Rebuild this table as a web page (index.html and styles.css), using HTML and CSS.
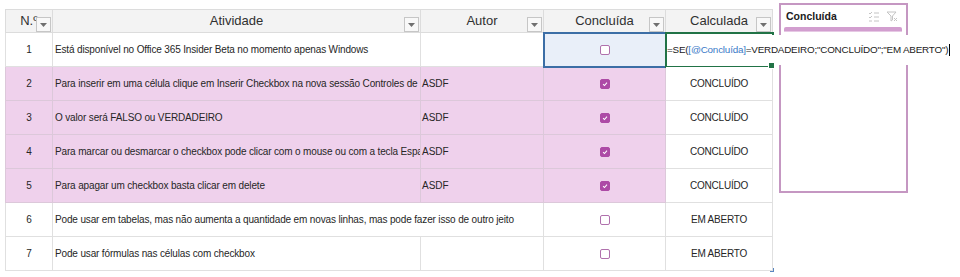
FILE: index.html
```html
<!DOCTYPE html>
<html lang="pt">
<head>
<meta charset="utf-8">
<title>Checkbox</title>
<link rel="stylesheet" href="styles.css">
</head>
<body>
<div class="sheet">
  <table class="tbl">
    <colgroup>
      <col class="c-n"><col class="c-at"><col class="c-au"><col class="c-co"><col class="c-ca">
    </colgroup>
    <thead>
      <tr>
        <th>N.º<span class="fbtn"><svg viewBox="0 0 7 4" width="7" height="4"><path d="M0 0h7L3.5 4z" fill="#707070"/></svg></span></th>
        <th>Atividade<span class="fbtn"><svg viewBox="0 0 7 4" width="7" height="4"><path d="M0 0h7L3.5 4z" fill="#707070"/></svg></span></th>
        <th>Autor<span class="fbtn"><svg viewBox="0 0 7 4" width="7" height="4"><path d="M0 0h7L3.5 4z" fill="#707070"/></svg></span></th>
        <th>Concluída<span class="fbtn"><svg viewBox="0 0 7 4" width="7" height="4"><path d="M0 0h7L3.5 4z" fill="#707070"/></svg></span></th>
        <th>Calculada<span class="fbtn"><svg viewBox="0 0 7 4" width="7" height="4"><path d="M0 0h7L3.5 4z" fill="#707070"/></svg></span></th>
      </tr>
    </thead>
    <tbody>
      <tr>
        <td class="num">1</td>
        <td class="txt">Está disponível no Office 365 Insider Beta no momento apenas Windows</td>
        <td class="aut"></td>
        <td class="chk sel"><span class="box"></span></td>
        <td class="calc edit"><div class="formula">=SE(<span class="ref">[@Concluída]</span>=VERDADEIRO;"CONCLUÍDO";"EM ABERTO")<span class="caret"></span></div></td>
      </tr>
      <tr class="done">
        <td class="num">2</td>
        <td class="txt">Para inserir em uma célula clique em Inserir Checkbox na nova sessão Controles de Célula</td>
        <td class="aut">ASDF</td>
        <td class="chk"><span class="box on"><svg viewBox="0 0 10 10" width="10" height="10"><path d="M2.6 5.3l1.7 1.6 3.2-3.6" fill="none" stroke="#fff" stroke-width="1.3"/></svg></span></td>
        <td class="calc">CONCLUÍDO</td>
      </tr>
      <tr class="done">
        <td class="num">3</td>
        <td class="txt">O valor será FALSO ou VERDADEIRO</td>
        <td class="aut">ASDF</td>
        <td class="chk"><span class="box on"><svg viewBox="0 0 10 10" width="10" height="10"><path d="M2.6 5.3l1.7 1.6 3.2-3.6" fill="none" stroke="#fff" stroke-width="1.3"/></svg></span></td>
        <td class="calc">CONCLUÍDO</td>
      </tr>
      <tr class="done">
        <td class="num">4</td>
        <td class="txt">Para marcar ou desmarcar o checkbox pode clicar com o mouse ou com a tecla Espaço</td>
        <td class="aut">ASDF</td>
        <td class="chk"><span class="box on"><svg viewBox="0 0 10 10" width="10" height="10"><path d="M2.6 5.3l1.7 1.6 3.2-3.6" fill="none" stroke="#fff" stroke-width="1.3"/></svg></span></td>
        <td class="calc">CONCLUÍDO</td>
      </tr>
      <tr class="done">
        <td class="num">5</td>
        <td class="txt">Para apagar um checkbox basta clicar em delete</td>
        <td class="aut">ASDF</td>
        <td class="chk"><span class="box on"><svg viewBox="0 0 10 10" width="10" height="10"><path d="M2.6 5.3l1.7 1.6 3.2-3.6" fill="none" stroke="#fff" stroke-width="1.3"/></svg></span></td>
        <td class="calc">CONCLUÍDO</td>
      </tr>
      <tr>
        <td class="num">6</td>
        <td class="txt spill">Pode usar em tabelas, mas não aumenta a quantidade em novas linhas, mas pode fazer isso de outro jeito</td>
        <td class="aut spilled"></td>
        <td class="chk"><span class="box"></span></td>
        <td class="calc">EM ABERTO</td>
      </tr>
      <tr>
        <td class="num">7</td>
        <td class="txt">Pode usar fórmulas nas células com checkbox</td>
        <td class="aut"></td>
        <td class="chk"><span class="box"></span></td>
        <td class="calc">EM ABERTO<span class="handle"></span></td>
      </tr>
    </tbody>
  </table>

  <div class="slicer">
    <div class="sl-head">
      <span class="sl-title">Concluída</span>
      <span class="sl-icons">
        <svg viewBox="0 0 12 11" width="12" height="11"><g fill="none" stroke="#c4c4c4" stroke-width="1"><path d="M1 2l1 1 2-2M1 6l1 1 2-2"/><path d="M6 2h5M6 6h5M6 10h5M1 10h3"/></g></svg>
        <svg viewBox="0 0 12 11" width="12" height="11"><g fill="none" stroke="#c4c4c4" stroke-width="1"><path d="M1 1h9L6.5 5v4l-1.5 1V5z"/><path d="M8 7l3 3M11 7l-3 3"/></g></svg>
      </span>
    </div>
    <div class="sl-item">
      <div class="sl-bar"></div>
      <div class="sl-body"></div>
      <div class="sl-foot"></div>
    </div>
  </div>
</div>
</body>
</html>
```
FILE: styles.css
```css
html, body {
  margin: 0;
  padding: 0;
  background: #ffffff;
}
body {
  width: 960px;
  height: 277px;
  overflow: hidden;
  font-family: "Liberation Sans", Arial, sans-serif;
  color: #262626;
}
.sheet {
  padding: 9px 0 0 5px;
}
.tbl {
  border-collapse: collapse;
  table-layout: fixed;
  width: 767px;
}
.c-n { width: 47px; }
.c-at { width: 368px; }
.c-au { width: 123px; }
.c-co { width: 122px; }
.c-ca { width: 107px; }

.tbl th {
  height: 22px;
  padding: 0;
  background: #f3f3f3;
  border: 1px solid #dcdcdc;
  font-weight: normal;
  font-size: 13px;
  color: #303030;
  text-align: center;
  position: relative;
  line-height: 22px;
  white-space: nowrap;
}
.fbtn {
  position: absolute;
  right: 1px;
  bottom: 0;
  width: 13px;
  height: 13px;
  border: 1px solid #c6c6c6;
  background: #f8f8f8;
  display: flex;
  align-items: center;
  justify-content: center;
}
.tbl td {
  height: 33px;
  padding: 0;
  border: 1px solid #e0e0e0;
  font-size: 10px;
  white-space: nowrap;
  overflow: hidden;
  vertical-align: middle;
}
.tbl tr.done td {
  background: #efd1ec;
  border-color: #dcc8da;
}
.tbl tr.done td.calc {
  background: #ffffff;
  border-color: #e0e0e0;
}
.num {
  text-align: center;
  font-size: 10.5px;
}
.tbl td.txt {
  padding-left: 2px;
  padding-right: 3px;
  letter-spacing: -0.15px;
}
.tbl td.spill {
  overflow: visible;
  border-right-style: hidden;
}
.tbl td.spilled {
  border-left-style: hidden;
}
.tbl td.aut {
  padding-left: 1px;
}
.chk {
  text-align: center;
}
.box {
  display: inline-flex;
  width: 8px;
  height: 8px;
  border: 1.5px solid #b071ad;
  border-radius: 2px;
  background: #fff;
  vertical-align: middle;
  align-items: center;
  justify-content: center;
}
.box.on {
  background: #ad4aa6;
  border-color: #ad4aa6;
}
.box svg { display: block; }
.calc {
  text-align: center;
  letter-spacing: -0.2px;
}
.tbl td.sel {
  background: #e9eff9;
  outline: 2px solid #3c6ea6;
  outline-offset: -1px;
}
.tbl td.edit {
  position: relative;
  overflow: visible;
  outline: 2px solid #217346;
  outline-offset: -1px;
}
.tbl td.edit::after {
  content: "";
  position: absolute;
  right: -3px;
  bottom: -3px;
  width: 5px;
  height: 5px;
  background: #217346;
  border: 1px solid #fff;
  z-index: 4;
}
.formula {
  position: absolute;
  left: 1px;
  top: 2px;
  height: 30px;
  width: 290px;
  background: #fff;
  z-index: 3;
  font-size: 9.85px;
  line-height: 30px;
  text-align: left;
  color: #1a1a1a;
  display: flex;
  align-items: center;
}
.ref { color: #3a7ac8; }
.caret {
  display: inline-block;
  width: 1px;
  height: 12px;
  background: #000;
  margin-left: 1px;
}
.tbl td:last-child { position: relative; overflow: visible; }
.handle {
  position: absolute;
  right: -2px;
  bottom: -2px;
  width: 3px;
  height: 3px;
  border-right: 1px solid #5a86c0;
  border-bottom: 1px solid #5a86c0;
}

.slicer {
  position: absolute;
  left: 779px;
  top: 3px;
  width: 117px;
  height: 186px;
  border: 2px solid #c597c2;
  background: #fff;
  z-index: 1;
  padding: 0 4px;
  box-sizing: content-box;
}
.sl-head {
  display: flex;
  align-items: center;
  height: 22px;
  padding: 0 1px;
}
.sl-title {
  font-weight: bold;
  font-size: 10.5px;
  color: #202020;
  flex: 1;
}
.sl-icons {
  display: flex;
  gap: 6px;
  margin-right: 3px;
}
.sl-item {
  display: flex;
  flex-direction: column;
  margin-left: -1px;
}
.sl-bar {
  height: 4px;
  background: #d29ecf;
  border-radius: 2px 2px 0 0;
  border-bottom: 1px solid #e6c8e4;
}
.sl-body {
  height: 31px;
}
.sl-foot {
  height: 2px;
  background: #c6c6c6;
  border-radius: 0 0 2px 2px;
}
```
